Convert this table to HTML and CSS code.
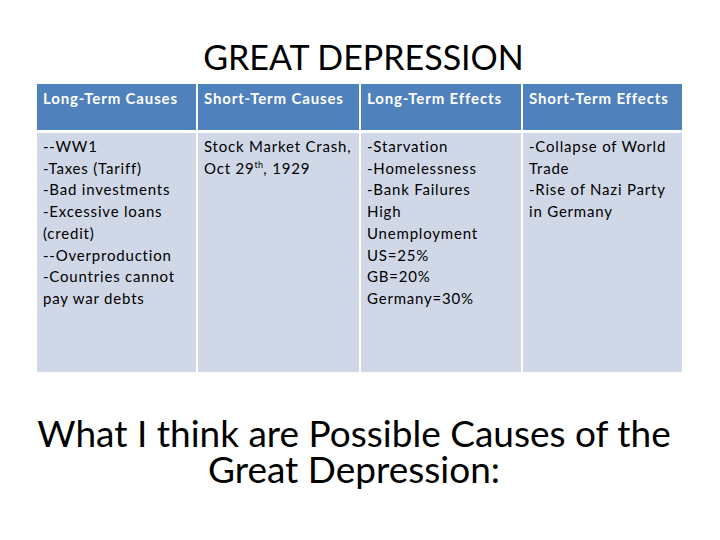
FILE: index.html
```html
<!DOCTYPE html>
<html>
<head>
<meta charset="utf-8">
<link rel="stylesheet" href="styles.css">
</head>
<body>
<div class="slide">
  <h1 class="title">GREAT DEPRESSION</h1>
  <div class="grid">
    <div class="cell head">Long-Term Causes</div>
    <div class="cell head">Short-Term Causes</div>
    <div class="cell head">Long-Term Effects</div>
    <div class="cell head">Short-Term Effects</div>
    <div class="cell body">--WW1<br>-Taxes (Tariff)<br>-Bad investments<br>-Excessive loans (credit)<br>--Overproduction<br>-Countries cannot pay war debts</div>
    <div class="cell body">Stock Market Crash, Oct 29<sup>th</sup>, 1929</div>
    <div class="cell body">-Starvation<br>-Homelessness<br>-Bank Failures<br>High Unemployment<br>US=25%<br>GB=20%<br>Germany=30%</div>
    <div class="cell body">-Collapse of World Trade<br>-Rise of Nazi Party in Germany</div>
  </div>
  <p class="question">What I think are Possible Causes of the<br>Great Depression:</p>
</div>
</body>
</html>
```
FILE: styles.css
```css
html, body {
  margin: 0;
  padding: 0;
  background: #ffffff;
}
.slide {
  width: 720px;
  height: 540px;
  overflow: hidden;
  font-family: Lato, "Open Sans", sans-serif;
  color: #000;
  display: flex;
  flex-direction: column;
}
.title {
  margin: 35px 0 0 7px;
  height: 49px;
  font-size: 34px;
  font-weight: normal;
  line-height: 44px;
  text-align: center;
}
.grid {
  margin-left: 37px;
  display: grid;
  grid-template-columns: 159px 161px 160px 159px;
  grid-template-rows: 46px 239px;
  column-gap: 2px;
  row-gap: 3px;
  width: 645px;
}
.cell {
  padding: 4px 5px 0 6px;
  font-size: 15px;
  line-height: 21.7px;
  letter-spacing: 0.8px;
}
.head {
  background: #4f81bd;
  color: #fff;
  font-weight: bold;
  padding-top: 4px;
  letter-spacing: 0.85px;
}
.body {
  background: #d0d8e8;
  padding-top: 3px;
}
sup {
  font-size: 9px;
  line-height: 0;
  letter-spacing: 0.3px;
}
.question {
  margin: 43px 0 0 0;
  padding-right: 12px;
  font-size: 37px;
  line-height: 36px;
  text-align: center;
}
```
